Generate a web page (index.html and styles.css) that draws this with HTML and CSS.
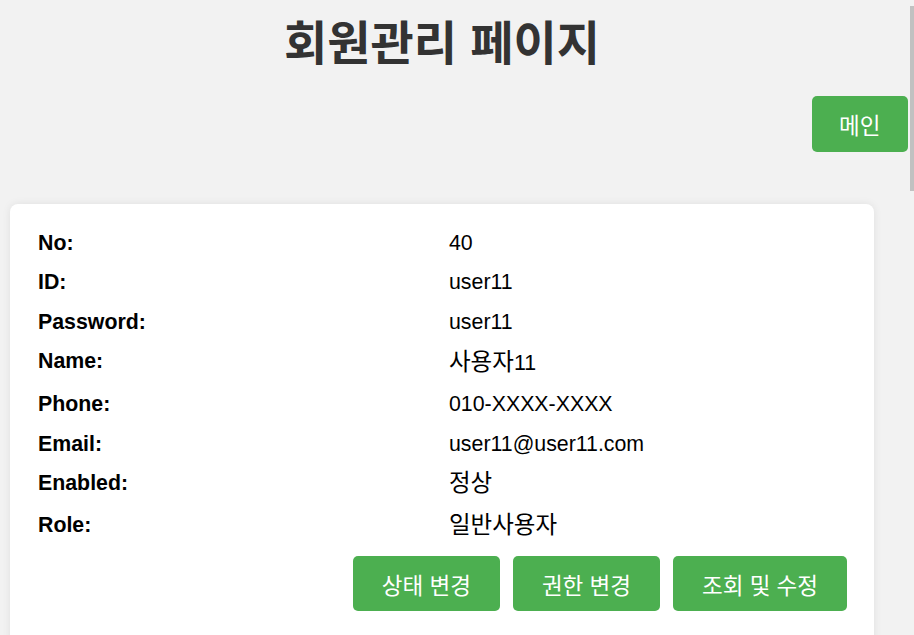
FILE: index.html
```html
<!DOCTYPE html>
<html lang="ko">
<head>
<meta charset="utf-8">
<title>회원관리 페이지</title>
<link rel="stylesheet" href="styles.css">
</head>
<body>
<div class="page">
  <h1 class="title">회원관리 페이지</h1>
  <div class="top-actions">
    <button class="btn btn-main">메인</button>
  </div>
  <div class="card">
    <div class="info">
      <div class="row"><span class="label">No:</span><span class="value">40</span></div>
      <div class="row"><span class="label">ID:</span><span class="value">user11</span></div>
      <div class="row"><span class="label">Password:</span><span class="value">user11</span></div>
      <div class="row"><span class="label">Name:</span><span class="value ko"><span class="hg">사용자</span>11</span></div>
      <div class="row"><span class="label">Phone:</span><span class="value">010-XXXX-XXXX</span></div>
      <div class="row"><span class="label">Email:</span><span class="value">user11@user11.com</span></div>
      <div class="row"><span class="label">Enabled:</span><span class="value ko ko-sm"><span class="hg">정상</span></span></div>
      <div class="row"><span class="label">Role:</span><span class="value ko ko-sm"><span class="hg">일반사용자</span></span></div>
    </div>
    <div class="actions">
      <button class="btn">상태 변경</button>
      <button class="btn">권한 변경</button>
      <button class="btn">조회 및 수정</button>
    </div>
  </div>
</div>
<div class="scroll-thumb"></div>
</body>
</html>
```
FILE: styles.css
```css
html {
  overflow: hidden;
}
body {
  margin: 0;
  background: #f2f2f2;
  font-family: "Liberation Sans", "Noto Sans CJK KR", sans-serif;
  color: #000;
}
.page {
  padding-top: 14px;
}
.title {
  width: 884px;
  margin: 0;
  text-align: center;
  font-family: "Noto Sans CJK KR", sans-serif;
  font-weight: 700;
  font-size: 47px;
  line-height: 52px;
  color: #333;
}
.top-actions {
  display: flex;
  justify-content: flex-end;
  padding-right: 6px;
  margin-top: 30px;
}
.btn {
  background: #4caf50;
  color: #fff;
  border: none;
  border-radius: 5px;
  font-family: "Liberation Sans", "Noto Sans CJK KR", sans-serif;
  font-size: 22.5px;
  height: 55px;
  padding: 0 29px;
  cursor: pointer;
}
.btn-main {
  height: 56px;
  padding: 0 27.5px;
}
.card {
  box-sizing: border-box;
  width: 864px;
  margin: 52px 0 0 10px;
  background: #fff;
  border-radius: 8px;
  box-shadow: 0 0 8px rgba(0, 0, 0, 0.08);
  padding: 19px 27px 40px 28px;
}
.row {
  display: grid;
  grid-template-columns: 411px 1fr;
  align-items: start;
}
.label,
.value {
  font-size: 21.33px;
  line-height: 24.5px;
  padding: 7.5px 0;
}
.label {
  font-weight: 700;
}
.value.ko {
  line-height: 28px;
  height: 28px;
}
.value.ko-sm {
  line-height: 27px;
  height: 27px;
}
.hg {
  font-size: 23.5px;
  line-height: 20px;
}
.actions {
  display: flex;
  justify-content: flex-end;
  gap: 13px;
  margin-top: 8.5px;
}
.scroll-thumb {
  position: fixed;
  top: 6px;
  right: 0;
  width: 4px;
  height: 185px;
  background: #c1c1c1;
}
```
